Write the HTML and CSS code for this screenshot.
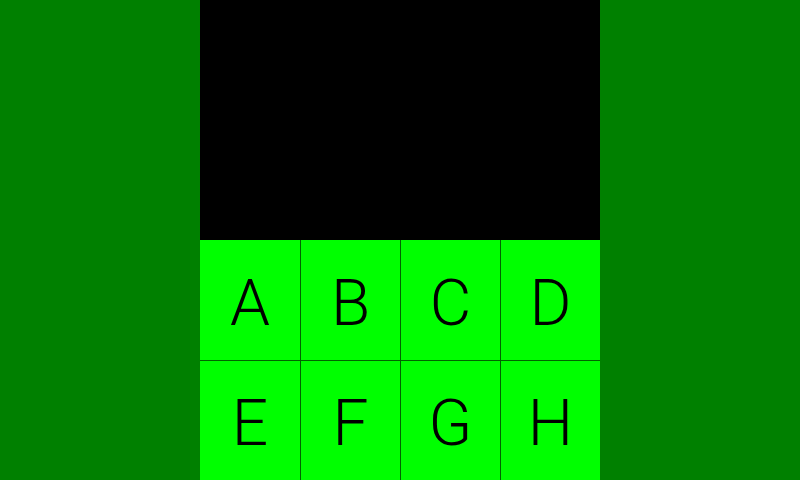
FILE: index.html
```html
<!DOCTYPE html>
<html>
<head>
<meta charset="utf-8">
<link rel="stylesheet" href="styles.css">
</head>
<body>
<div class="page">
  <div class="column">
    <div class="screen"></div>
    <div class="keys">
      <div class="key">A</div>
      <div class="key">B</div>
      <div class="key">C</div>
      <div class="key">D</div>
      <div class="key">E</div>
      <div class="key">F</div>
      <div class="key">G</div>
      <div class="key">H</div>
    </div>
  </div>
</div>
</body>
</html>
```
FILE: styles.css
```css
html, body {
  margin: 0;
  padding: 0;
}
body {
  width: 800px;
  height: 480px;
  background: #008000;
  overflow: hidden;
}
.page {
  display: flex;
  justify-content: center;
  height: 480px;
}
.column {
  width: 400px;
  display: flex;
  flex-direction: column;
}
.screen {
  height: 240px;
  background: #000;
}
.keys {
  height: 240px;
  display: grid;
  grid-template-columns: repeat(4, 100px);
  grid-template-rows: 120px 120px;
}
.key {
  background: #00ff00;
  display: flex;
  align-items: center;
  justify-content: center;
  padding-top: 7px;
  font-family: Roboto, sans-serif;
  font-size: 64px;
  font-weight: 300;
  line-height: 1;
  color: #000;
  box-sizing: border-box;
}
.key:nth-child(n+5) {
  border-top: 1px solid #006400;
}
.key:not(:nth-child(4n+1)) {
  border-left: 1px solid #006400;
}
```
